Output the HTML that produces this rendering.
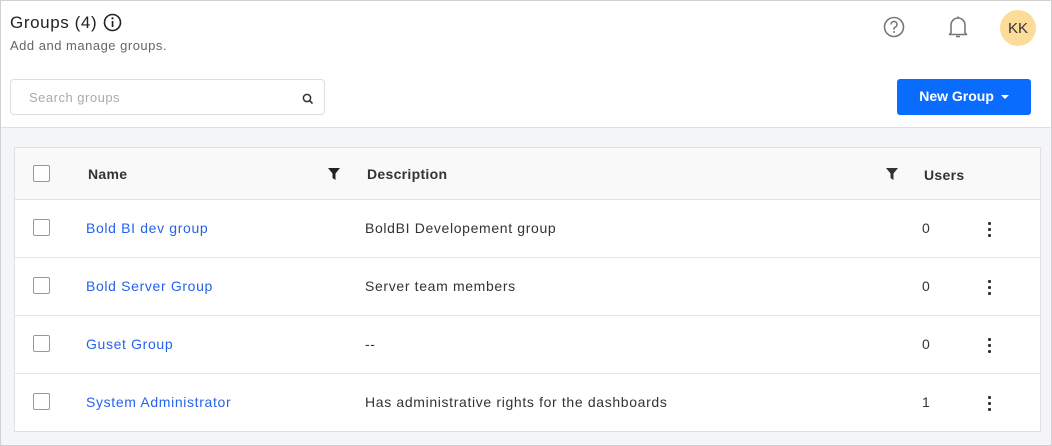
<!DOCTYPE html>
<html><head><style>
*{box-sizing:border-box;margin:0;padding:0}
body{width:1052px;height:446px;font-family:"Liberation Sans",sans-serif;background:#fff;overflow:hidden;position:relative}
.frame{position:absolute;left:0;top:0;width:1052px;height:446px;border:1px solid #d0d0d0;background:#f3f5f8}
.top{position:absolute;left:1px;top:1px;width:1050px;height:127px;background:#fff;border-bottom:1px solid #e0e0e0}
.abs{position:absolute}
.title{left:9px;top:12px;font-size:17px;color:#222;letter-spacing:0.6px}
.sub{left:9px;top:37px;font-size:13px;color:#666;letter-spacing:0.5px}
.search{left:9px;top:78px;width:315px;height:36px;border:1px solid #ddd;border-radius:4px}
.search span{position:absolute;left:18px;top:10px;font-size:13px;color:#aaa;letter-spacing:0.5px}
.btn{left:896px;top:78px;width:134px;height:36px;background:#0a6cff;border-radius:3px;color:#fff;font-size:14px;font-weight:bold;text-align:center;line-height:34px}
.av{left:999px;top:9px;width:36px;height:36px;border-radius:50%;background:#fddc9a;color:#333;font-size:15px;text-align:center;line-height:38px}
.table{position:absolute;left:14px;top:147px;width:1027px;height:285px;border:1px solid #e0e0e0;background:#fff}
.hdr{position:absolute;left:0;top:0;width:1025px;height:52px;background:#f9f9f9;border-bottom:1px solid #e0e0e0}
.row{position:absolute;left:0;width:1025px;height:58px;border-bottom:1px solid #e4e4e4}
.cb{position:absolute;left:18px;width:17px;height:17px;border:1px solid #999;border-radius:2px;background:#fff}
.t{position:absolute;font-size:14px;color:#333;letter-spacing:0.65px}
.hdr .t{font-weight:bold;color:#333;top:18px;letter-spacing:0.3px}
.lnk{color:#2563eb}
.dots{position:absolute;left:973px;width:3px}
.dots i{display:block;width:3px;height:3px;background:#333;margin-bottom:3px;border-radius:1px}
</style></head><body>
<div class="frame"></div>
<div class="top">
<div class="abs title">Groups (4)</div>
<svg class="abs" style="left:102px;top:12px" width="19" height="19" viewBox="0 0 19 19"><circle cx="9.5" cy="9.5" r="8" fill="none" stroke="#222" stroke-width="1.6"/><rect x="8.7" y="8" width="1.7" height="6" fill="#222"/><circle cx="9.5" cy="5.3" r="1.1" fill="#222"/></svg>
<div class="abs sub">Add and manage groups.</div>
<svg class="abs" style="left:882px;top:15px" width="22" height="22" viewBox="0 0 22 22"><circle cx="11" cy="11" r="9.5" fill="none" stroke="#777" stroke-width="1.6"/><path d="M8 8.5a3 3 0 1 1 4.2 2.7c-.8.4-1.2 1-1.2 1.8v.6" fill="none" stroke="#777" stroke-width="1.6"/><circle cx="11" cy="16" r="1" fill="#777"/></svg>
<svg class="abs" style="left:946px;top:14px" width="22" height="24" viewBox="0 0 22 24"><path d="M4 18V10a7 7 0 0 1 14 0v8l1.5 1.5H2.5z" fill="none" stroke="#777" stroke-width="1.6" stroke-linejoin="round"/><path d="M9 21.5h4" stroke="#777" stroke-width="1.6"/><path d="M11 1.5v1.5" stroke="#777" stroke-width="1.6"/></svg>
<div class="abs av">KK</div>
<div class="abs search"><span>Search groups</span>
<svg style="position:absolute;left:291px;top:13px" width="12" height="12" viewBox="0 0 12 12"><circle cx="5" cy="5" r="3.6" fill="none" stroke="#333" stroke-width="1.5"/><path d="M7.7 7.7L10.5 10.5" stroke="#333" stroke-width="1.6"/></svg></div>
<div class="abs btn">New Group <span style="display:inline-block;border-left:4px solid transparent;border-right:4px solid transparent;border-top:4px solid #fff;vertical-align:middle;margin-left:3px"></span></div>
</div>
<div class="table">
<div class="hdr">
<div class="cb" style="top:17px"></div>
<div class="t" style="left:73px">Name</div>
<svg class="abs" style="left:313px;top:20px" width="12" height="12" viewBox="0 0 12 12"><path d="M0 0h12L7.5 5.5V12L4.5 10V5.5z" fill="#222"/></svg>
<div class="t" style="left:352px">Description</div>
<svg class="abs" style="left:871px;top:20px" width="12" height="12" viewBox="0 0 12 12"><path d="M0 0h12L7.5 5.5V12L4.5 10V5.5z" fill="#333"/></svg>
<div class="t" style="left:909px;top:19px">Users</div>
</div>
<div class="row" style="top:52px"><div class="cb" style="top:19px"></div><div class="t lnk" style="left:71px;top:20px">Bold BI dev group</div><div class="t" style="left:350px;top:20px">BoldBI Developement group</div><div class="t" style="left:907px;top:20px">0</div><div class="dots" style="top:22px"><i></i><i></i><i></i></div></div>
<div class="row" style="top:110px"><div class="cb" style="top:19px"></div><div class="t lnk" style="left:71px;top:20px">Bold Server Group</div><div class="t" style="left:350px;top:20px">Server team members</div><div class="t" style="left:907px;top:20px">0</div><div class="dots" style="top:22px"><i></i><i></i><i></i></div></div>
<div class="row" style="top:168px"><div class="cb" style="top:19px"></div><div class="t lnk" style="left:71px;top:20px">Guset Group</div><div class="t" style="left:350px;top:20px">--</div><div class="t" style="left:907px;top:20px">0</div><div class="dots" style="top:22px"><i></i><i></i><i></i></div></div>
<div class="row" style="top:226px;border-bottom:none"><div class="cb" style="top:19px"></div><div class="t lnk" style="left:71px;top:20px">System Administrator</div><div class="t" style="left:350px;top:20px">Has administrative rights for the dashboards</div><div class="t" style="left:907px;top:20px">1</div><div class="dots" style="top:22px"><i></i><i></i><i></i></div></div>
</div>
</body></html>
